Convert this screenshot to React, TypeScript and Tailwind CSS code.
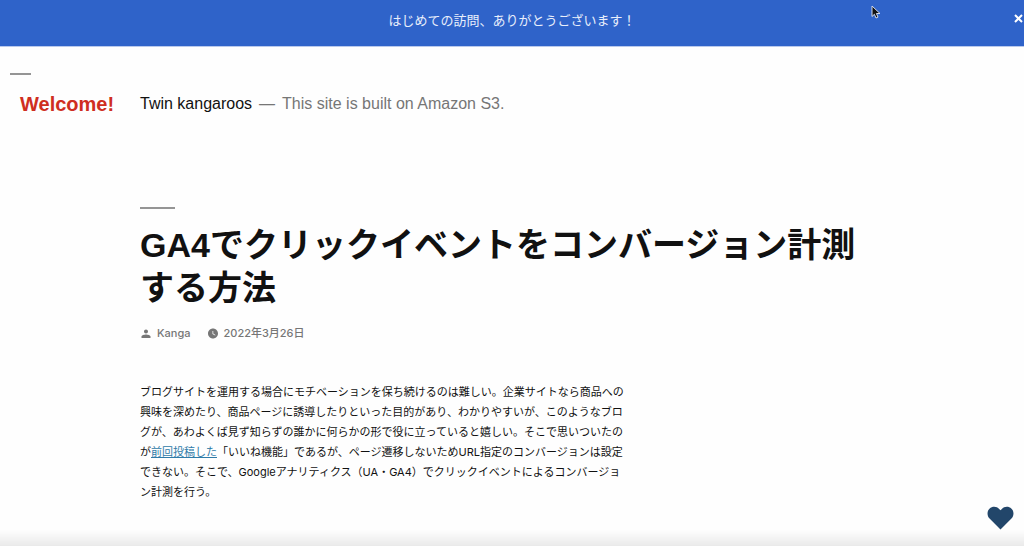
import type { ReactNode } from "react";

function NoticeBar({ children }: Readonly<{ children: ReactNode }>) {
  return (
    <div className="relative flex h-[47px] items-center justify-center border-b border-[#b9c9ec] bg-[#2f63c9] pb-1 text-[13px] text-[#e8eefb]">
      <p>{children}</p>
      <button
        type="button"
        aria-label="閉じる"
        className="absolute top-3 right-0 flex h-3 w-[11px] items-center justify-center text-white"
      >
        <svg viewBox="0 0 11 12" className="h-3 w-[11px]" aria-hidden="true">
          <path d="M2 3l7 7M9 3l-7 7" stroke="currentColor" strokeWidth="2" fill="none" />
        </svg>
      </button>
    </div>
  );
}

function SiteHeader() {
  return (
    <header className="px-[10px] pt-[26px] font-['Liberation_Sans','Noto_Sans_CJK_JP',sans-serif]">
      <div className="h-0.5 w-[21px] bg-[#959595]" />
      <div className="flex items-center pt-[15px]">
        <a
          href="#welcome"
          className="w-[130px] shrink-0 pl-[10px] text-xl leading-7 font-bold text-[#cf2e21]"
        >
          Welcome!
        </a>
        <p className="text-base leading-7 text-[#767676]">
          <a href="#home" className="text-[#111111]">
            Twin kangaroos
          </a>
          <span className="mx-[7px]">—</span>
          This site is built on Amazon S3.
        </p>
      </div>
    </header>
  );
}

function PersonIcon() {
  return (
    <svg viewBox="0 0 24 24" className="size-3" fill="currentColor" aria-hidden="true">
      <path d="M12 13c2.21 0 4-1.79 4-4s-1.79-4-4-4-4 1.79-4 4 1.79 4 4 4zm0 2c-2.67 0-9 1.34-9 4v3h18v-3c0-2.66-6.33-4-9-4z" />
    </svg>
  );
}

function ClockIcon() {
  return (
    <svg viewBox="0 0 24 24" className="size-3" fill="currentColor" aria-hidden="true">
      <path d="M12 3C6.5 3 2 7.500 2 13s4.500 10 10 10 10-4.500 10-10S17.500 3 12 3zm4.200 14.200L11 14V8h1.500v5.200l4.500 2.700-.8 1.300z" />
    </svg>
  );
}

function Article() {
  return (
    <article className="px-[140px] pt-[89px]">
      <div className="h-0.5 w-[35px] bg-[#959595]" />
      <h1 className="pt-[15px] font-['Liberation_Sans','Noto_Sans_CJK_JP',sans-serif] text-[34px] leading-[43px] font-bold text-[#111111]">
        GA4でクリックイベントをコンバージョン計測する方法
      </h1>
      <div className="flex items-center gap-4 pt-[13px] text-[11px] leading-5 font-medium text-[#767676]">
        <span className="flex items-center gap-[5px]">
          <PersonIcon />
          Kanga
        </span>
        <span className="flex items-center gap-[5px]">
          <ClockIcon />
          <time dateTime="2022-03-26">2022年3月26日</time>
        </span>
      </div>
      <p className="max-w-[488px] pt-[39px] text-[11px] leading-5 text-[#111111]">
        ブログサイトを運用する場合にモチベーションを保ち続けるのは難しい。企業サイトなら商品への興味を深めたり、商品ページに誘導したりといった目的があり、わかりやすいが、このようなブログが、あわよくば見ず知らずの誰かに何らかの形で役に立っていると嬉しい。そこで思いついたのが
        <a href="#previous" className="text-[#2f7ba8] underline">
          前回投稿した
        </a>
        「いいね機能」であるが、ページ遷移しないためURL指定のコンバージョンは設定できない。そこで、Googleアナリティクス（UA・GA4）でクリックイベントによるコンバージョン計測を行う。
      </p>
    </article>
  );
}

function LikeButton() {
  return (
    <button
      type="button"
      aria-label="いいね"
      className="fixed right-[10px] bottom-4 text-[#22466a]"
    >
      <svg viewBox="0 0 28 25" className="h-6 w-[27px]" fill="currentColor" aria-hidden="true">
        <path d="M14 24.500L2.600 13C-.3 10-.1 5.200 2.500 2.800 5.600 0 10.200.5 12.600 3L14 4.500 15.400 3C17.800.5 22.400 0 25.500 2.800 28.100 5.200 28.300 10 25.400 13z" />
      </svg>
    </button>
  );
}

function Pointer() {
  return (
    <svg
      viewBox="0 0 10 14"
      className="pointer-events-none absolute top-[5px] left-[871px] h-[14px] w-[10px]"
      aria-hidden="true"
    >
      <path
        d="M1 1v10.500l2.400-2.200 1.600 3.700 2-.9-1.600-3.600H9z"
        fill="#111111"
        stroke="#d5dbe8"
        strokeWidth="1"
      />
    </svg>
  );
}

export default function App() {
  return (
    <div
      lang="ja"
      className="relative min-h-screen bg-[#fefefe] font-['Inter','Noto_Sans_CJK_JP',sans-serif]"
    >
      <NoticeBar>はじめての訪問、ありがとうございます！</NoticeBar>
      <SiteHeader />
      <Article />
      <div className="pointer-events-none fixed inset-x-0 bottom-0 h-4 bg-linear-to-b from-transparent to-black/8" />
      <LikeButton />
      <Pointer />
    </div>
  );
}
